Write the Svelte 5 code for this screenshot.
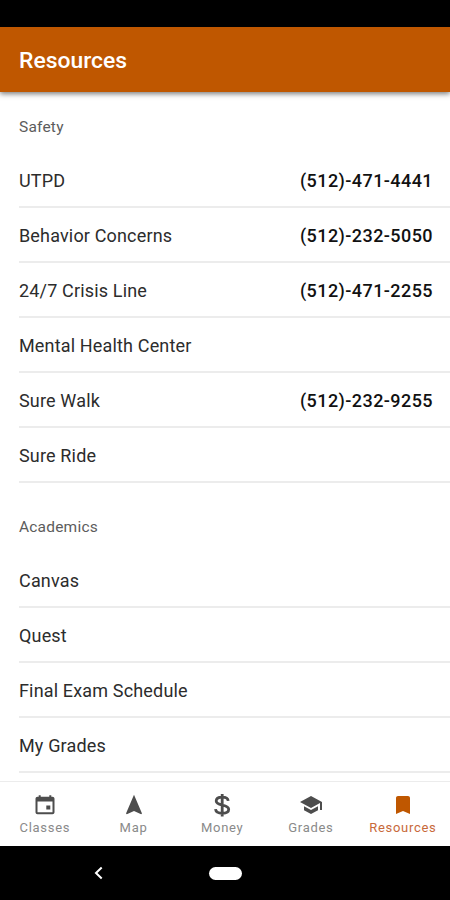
<script>
  const sections = [
    {
      title: 'Safety',
      items: [
        { name: 'UTPD', phone: '(512)-471-4441' },
        { name: 'Behavior Concerns', phone: '(512)-232-5050' },
        { name: '24/7 Crisis Line', phone: '(512)-471-2255' },
        { name: 'Mental Health Center' },
        { name: 'Sure Walk', phone: '(512)-232-9255' },
        { name: 'Sure Ride' }
      ]
    },
    {
      title: 'Academics',
      items: [
        { name: 'Canvas' },
        { name: 'Quest' },
        { name: 'Final Exam Schedule' },
        { name: 'My Grades' }
      ]
    }
  ];

  const tabs = [
    { label: 'Classes', icon: 'M19.500 3.700h-1.200V2.200h-2v1.500H7.700V2.200h-2v1.500H4.500c-1.100 0-2 .9-2 2v13.600c0 1.100.9 2 2 2h15c1.100 0 2-.9 2-2V5.700c0-1.100-.9-2-2-2zm0 15.600h-15V8.500h15v10.800zM17.300 12.500h-4v4h4v-4z' },
    { label: 'Map', icon: 'M12 1.800L4 20.600l.8.7L12 18l7.200 3.300.8-.7z' },
    { label: 'Money', stroke: 'M18.200 7.800C17.900 5.400 15.700 4.200 12.200 4.200c-3.600 0-6 1.500-6 3.900 0 5.300 12.500 2.700 12.500 8.200 0 2.500-2.600 4-6.300 4-4 0-6.600-1.400-6.900-4.100M12.200 1v22.500' },
    { label: 'Grades', icon: 'M5 13.180v4L12 21l7-3.820v-4L12 17l-7-3.820zM12 3L1 9l11 6 9-4.910V17h2V9L12 3z' },
    { label: 'Resources', icon: 'M17 3H7c-1.100 0-2 .9-2 2v16l7-3 7 3V5c0-1.100-.9-2-2-2z', active: true }
  ];
</script>

<div class="screen">
  <div class="status"></div>
  <header><h1>Resources</h1></header>
  <main>
    {#each sections as section}
      <section>
        <h2>{section.title}</h2>
        <ul>
          {#each section.items as item}
            <li>
              <span>{item.name}</span>
              {#if item.phone}<strong>{item.phone}</strong>{/if}
            </li>
          {/each}
        </ul>
      </section>
    {/each}
  </main>
  <nav>
    {#each tabs as tab}
      <div class="tab" class:active={tab.active}>
        <svg viewBox="0 0 24 24">
          {#if tab.stroke}
            <path class="line" d={tab.stroke} />
          {:else}
            <path d={tab.icon} />
          {/if}
        </svg>
        <span>{tab.label}</span>
      </div>
    {/each}
  </nav>
  <footer>
    <svg class="back" viewBox="0 0 9 14"><path d="M7.700 1.500L2 7l5.700 5.500" /></svg>
    <div class="home"></div>
    <div class="spacer"></div>
  </footer>
</div>

<style>
  :global(body) {
    margin: 0;
  }
  .screen {
    width: 450px;
    height: 900px;
    display: flex;
    flex-direction: column;
    overflow: hidden;
    background: #fff;
    font-family: Roboto, 'Liberation Sans', sans-serif;
  }
  .status {
    height: 27px;
    flex: none;
    background: #000;
  }
  header {
    position: relative;
    height: 65px;
    flex: none;
    box-sizing: border-box;
    padding: 2px 0 0 19px;
    display: flex;
    align-items: center;
    background: #bf5700;
    box-shadow: 0 2px 5px rgba(0, 0, 0, 0.5);
  }
  h1 {
    margin: 0;
    font-size: 22.900px;
    font-weight: 500;
    line-height: 27px;
    color: #fff;
  }
  main {
    flex: 1;
    min-height: 0;
    overflow: hidden;
  }
  h2 {
    box-sizing: border-box;
    height: 70px;
    margin: 0;
    padding: 34px 0 0 19px;
    font-size: 15.500px;
    font-weight: 400;
    line-height: 20px;
    letter-spacing: 0.200px;
    color: #5c5c5c;
  }
  section:first-child h2 {
    height: 61px;
    padding-top: 25px;
  }
  ul {
    margin: 0;
    padding: 0 0 0 19px;
    list-style: none;
  }
  li {
    box-sizing: border-box;
    height: 55px;
    padding: 2px 17px 0 0;
    border-bottom: 2px solid #ececec;
    display: flex;
    align-items: center;
    justify-content: space-between;
    font-size: 18px;
    line-height: 24px;
    letter-spacing: 0.160px;
    color: #2c2c2c;
  }
  strong {
    font-weight: 500;
    letter-spacing: 0.430px;
    color: #111;
  }
  nav {
    height: 65px;
    flex: none;
    box-sizing: border-box;
    border-top: 1px solid #ececec;
    display: flex;
    background: #fff;
  }
  .tab {
    width: 88.700px;
    flex: none;
    padding: 11px 0 0 1px;
    box-sizing: border-box;
    display: flex;
    flex-direction: column;
    align-items: center;
    color: #8a8a8a;
    font-size: 13px;
    line-height: 16px;
    letter-spacing: 0.700px;
  }
  .tab:last-child {
    flex: 1;
  }
  .tab svg {
    width: 24px;
    height: 24px;
    margin-bottom: 3px;
    fill: #4d4d4d;
  }
  .tab .line {
    fill: none;
    stroke: #4d4d4d;
    stroke-width: 2.800;
  }
  .tab.active {
    color: #c8693a;
  }
  .tab.active svg {
    fill: #bf5700;
  }
  footer {
    height: 54px;
    flex: none;
    display: flex;
    align-items: center;
    justify-content: space-between;
    padding: 0 94px;
    background: #000;
  }
  .back {
    width: 9px;
    height: 14px;
    fill: none;
    stroke: #fff;
    stroke-width: 2;
  }
  .home {
    width: 33px;
    height: 13px;
    border-radius: 6.500px;
    background: #fff;
  }
  .spacer {
    width: 9px;
  }
</style>
